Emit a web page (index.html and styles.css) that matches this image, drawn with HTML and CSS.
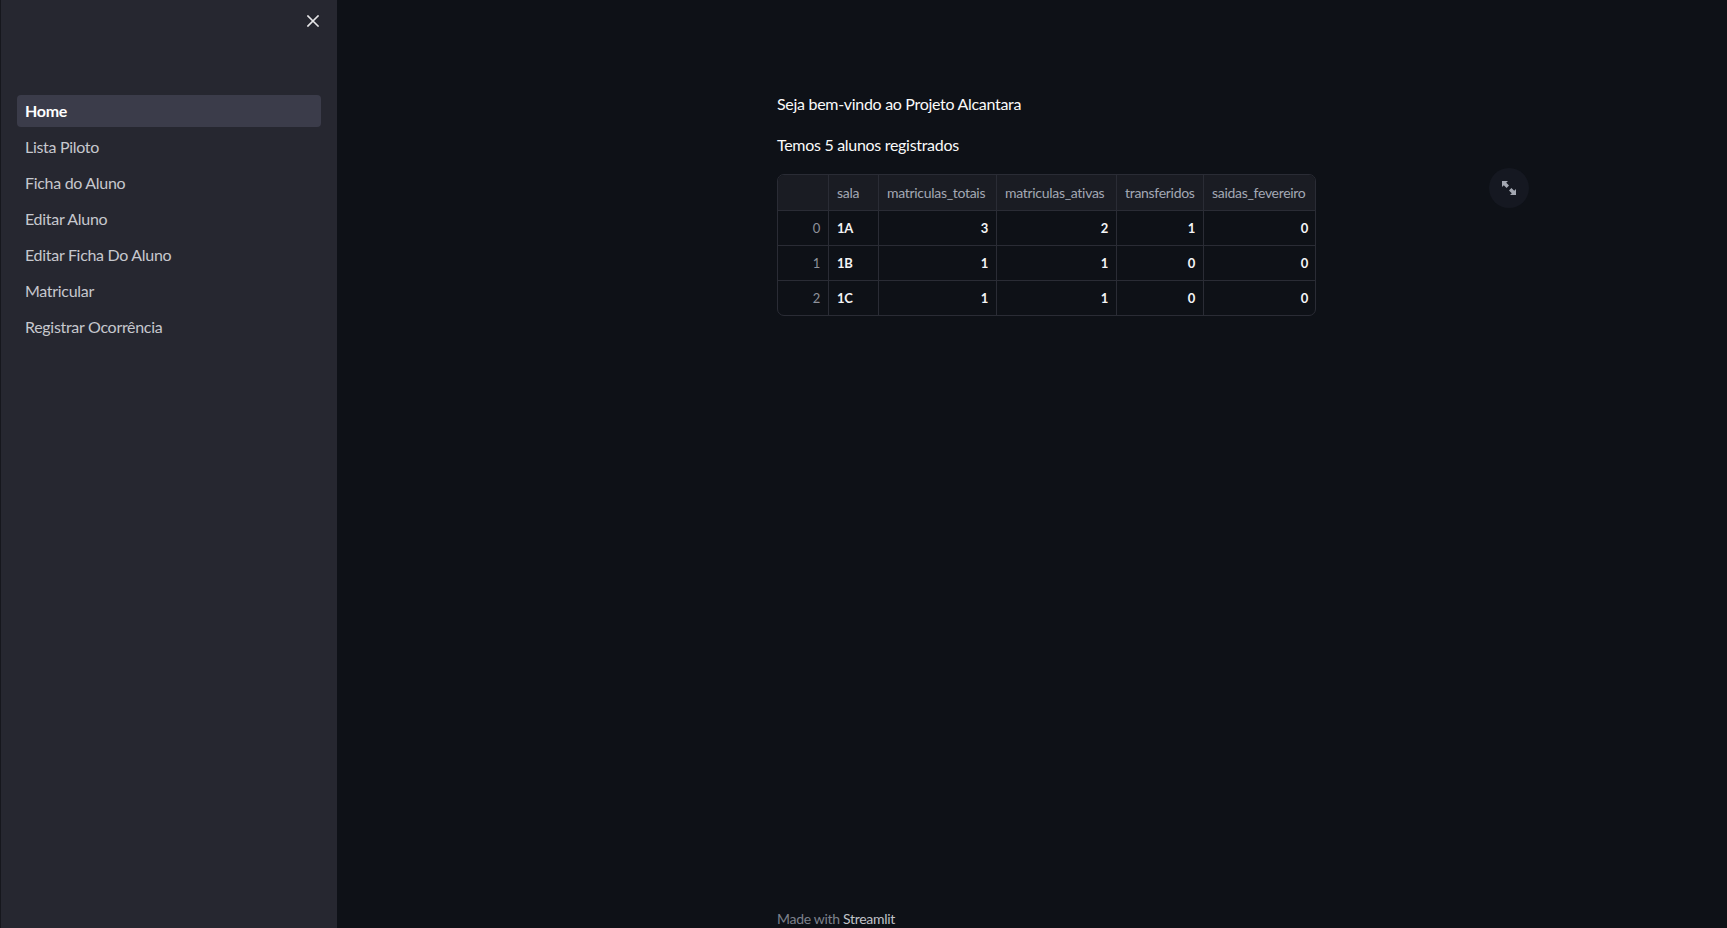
FILE: index.html
```html
<!DOCTYPE html>
<html lang="pt">
<head>
<meta charset="utf-8">
<title>Home</title>
<link rel="stylesheet" href="styles.css">
</head>
<body>
<aside class="sidebar">
  <div class="sidebar-head">
    <button class="close-btn" aria-label="Fechar">
      <svg viewBox="0 0 12 12" width="12" height="12"><path d="M1 1 L11 11 M11 1 L1 11" stroke="#e6e6e8" stroke-width="1.6" fill="none" stroke-linecap="square"/></svg>
    </button>
  </div>
  <nav>
    <ul class="nav">
      <li class="nav-item active">Home</li>
      <li class="nav-item">Lista Piloto</li>
      <li class="nav-item">Ficha do Aluno</li>
      <li class="nav-item">Editar Aluno</li>
      <li class="nav-item">Editar Ficha Do Aluno</li>
      <li class="nav-item">Matricular</li>
      <li class="nav-item">Registrar Ocorrência</li>
    </ul>
  </nav>
</aside>
<main class="main">
  <div class="content">
    <p class="text">Seja bem-vindo ao Projeto Alcantara</p>
    <p class="text">Temos 5 alunos registrados</p>
    <div class="frame">
      <div class="grid">
        <table>
          <colgroup>
            <col class="c-idx"><col class="c-sala"><col class="c-tot"><col class="c-atv"><col class="c-tra"><col class="c-sai">
          </colgroup>
          <thead>
            <tr><th class="idx"></th><th>sala</th><th>matriculas_totais</th><th>matriculas_ativas</th><th>transferidos</th><th>saidas_fevereiro</th></tr>
          </thead>
          <tbody>
            <tr><td class="idx">0</td><td class="txt">1A</td><td>3</td><td>2</td><td>1</td><td>0</td></tr>
            <tr><td class="idx">1</td><td class="txt">1B</td><td>1</td><td>1</td><td>0</td><td>0</td></tr>
            <tr><td class="idx">2</td><td class="txt">1C</td><td>1</td><td>1</td><td>0</td><td>0</td></tr>
          </tbody>
        </table>
      </div>
      <button class="fullscreen" aria-label="Tela cheia">
        <svg viewBox="0 0 14 14" width="14" height="14">
          <path d="M0 0 H6 L4.2 1.8 L7 4.6 L4.6 7 L1.8 4.2 L0 6 Z" fill="#a3a7b1"/>
          <path d="M14 14 H8 L9.8 12.2 L7 9.4 L9.4 7 L12.2 9.8 L14 8 Z" fill="#a3a7b1"/>
        </svg>
      </button>
    </div>
  </div>
  <footer class="footer">Made with <span class="brand">Streamlit</span></footer>
</main>
</body>
</html>
```

FILE: styles.css
```css
* { box-sizing: border-box; }
html, body { margin: 0; padding: 0; height: 100%; }
body {
  display: flex;
  height: 928px;
  overflow: hidden;
  background: #0e1117;
  font-family: Lato, "Source Sans Pro", "Liberation Sans", sans-serif;
  letter-spacing: -0.3px;
  color: #fafafa;
}
.sidebar {
  width: 337px;
  flex: 0 0 337px;
  background: #262730;
  border-left: 1px solid #16171d;
  padding: 0 16px;
}
.sidebar-head {
  height: 95px;
  display: flex;
  justify-content: flex-end;
  align-items: flex-start;
  padding-top: 9px;
  margin-right: -4px;
}
.close-btn {
  width: 24px;
  height: 24px;
  border: 0;
  background: transparent;
  padding: 0;
  display: flex;
  align-items: center;
  justify-content: center;
}
.nav { list-style: none; margin: 0; padding: 0; display: flex; flex-direction: column; gap: 4px; }
.nav-item {
  height: 32px;
  line-height: 32px;
  padding: 0 8px;
  border-radius: 4px;
  font-size: 16px;
  color: #c6c8ce;
}
.nav-item.active {
  background: #3b3c4a;
  color: #ffffff;
  font-weight: 700;
}
.main {
  flex: 1;
  display: flex;
  flex-direction: column;
  min-width: 0;
}
.content {
  flex: 1;
  padding: 92px 0 0 440px;
}
.text {
  margin: 0 0 17px;
  font-size: 16px;
  line-height: 24px;
  color: #fafafa;
}
.frame {
  position: relative;
  width: 736px;
}
.grid {
  width: 539px;
  border: 1px solid #2a2c35;
  border-radius: 7px;
  overflow: hidden;
}
table {
  border-collapse: collapse;
  table-layout: fixed;
  margin: -1px;
  width: calc(100% + 2px);
}
.c-idx { width: 51px; }
.c-sala { width: 50px; }
.c-tot { width: 118px; }
.c-atv { width: 120px; }
.c-tra { width: 87px; }
.c-sai { width: 113px; }
th, td {
  border: 1px solid #2a2c35;
  padding: 0 8px;
  font-size: 14px;
  white-space: nowrap;
  overflow: hidden;
}
th {
  height: 36px;
  background: #1a1c23;
  color: #a3a8b4;
  font-weight: 400;
  text-align: left;
}
td {
  height: 35px;
  text-align: right;
  color: #f4f4f6;
  font-weight: 700;
  font-size: 13px;
}
td.idx { color: #8e929c; font-weight: 400; }
td.txt { text-align: left; }
.fullscreen {
  position: absolute;
  left: 712px;
  top: -6px;
  width: 40px;
  height: 40px;
  border-radius: 50%;
  border: 0;
  background: #151821;
  display: flex;
  align-items: center;
  justify-content: center;
  padding: 0;
}
.footer {
  padding-left: 440px;
  font-size: 14px;
  line-height: 18px;
  color: #7d818c;
}
.brand { color: #c0c2c8; }
```
